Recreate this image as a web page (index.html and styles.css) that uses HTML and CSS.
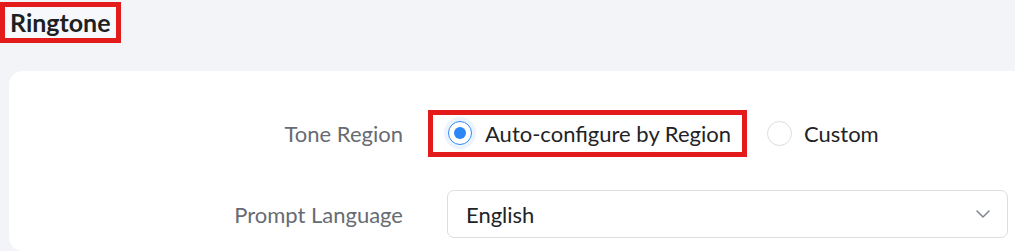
FILE: index.html
```html
<!DOCTYPE html>
<html lang="en">
<head>
<meta charset="UTF-8">
<title>Ringtone</title>
<link rel="stylesheet" href="styles.css">
</head>
<body>
  <div class="page-head">
    <h1 class="title mark">Ringtone</h1>
  </div>

  <div class="card">
    <!-- tone region -->
    <div class="row">
      <label class="label">Tone Region</label>
      <div class="control radios">
        <div class="mark radio-box">
          <span class="radio checked"><span class="dot"></span></span>
          <span class="radio-text">Auto-configure by Region</span>
        </div>
        <div class="radio-item">
          <span class="radio"></span>
          <span class="radio-text">Custom</span>
        </div>
      </div>
    </div>

    <!-- prompt language -->
    <div class="row">
      <label class="label">Prompt Language</label>
      <div class="control">
        <div class="select">
          <span>English</span>
          <svg class="chevron" width="14" height="8" viewBox="0 0 14 8">
            <path d="M1 1l6 6 6-6" fill="none" stroke="#80858f" stroke-width="1.5" stroke-linecap="round" stroke-linejoin="round"/>
          </svg>
        </div>
      </div>
    </div>
  </div>
</body>
</html>
```

FILE: styles.css
```css
html, body {
  overflow: hidden;
}
body {
  margin: 0;
  background: #f3f4f7;
  font-family: Lato, "Open Sans", sans-serif;
  color: #222326;
}
.page-head {
  height: 71px;
}
.mark {
  border: 5px solid #e31b1b;
}
.title {
  display: inline-block;
  margin: 2px 0 0 0;
  padding: 0 5px 0 5px;
  height: 31px;
  line-height: 31px;
  font-size: 25px;
  font-weight: 700;
  background: #f7f8fb;
  color: #1e1f22;
}
.card {
  margin: 0 -30px 0 9px;
  height: 180px;
  background: #fff;
  border-radius: 14px;
  padding-top: 38px;
  box-sizing: border-box;
}
.row {
  display: flex;
  align-items: center;
  height: 48px;
  margin-bottom: 33px;
}
.label {
  width: 394px;
  padding-right: 44px;
  box-sizing: content-box;
  text-align: right;
  font-size: 22px;
  color: #676b73;
}
.control {
  flex: 1;
}
.radios {
  display: flex;
  align-items: center;
}
.radio-box {
  display: flex;
  align-items: center;
  margin-left: -19px;
  height: 37px;
  padding: 0 11px 0 0;
}
.radio-item {
  display: flex;
  align-items: center;
  margin-left: 20px;
}
.radio {
  width: 25px;
  height: 25px;
  border-radius: 50%;
  border: 1px solid #dcdde0;
  box-sizing: border-box;
  display: flex;
  align-items: center;
  justify-content: center;
  margin-right: 12px;
}
.radio.checked {
  width: 24px;
  height: 24px;
  border: 1.5px solid #2d86f5;
  box-shadow: 0 0 0 4px #eaf3fe;
  margin-left: 15px;
  margin-right: 13px;
}
.dot {
  width: 12px;
  height: 12px;
  border-radius: 50%;
  background: #2d86f5;
}
.radio-text {
  font-size: 22px;
  color: #222326;
}
.select {
  width: 561px;
  height: 48px;
  box-sizing: border-box;
  border: 1px solid #dcdde0;
  border-radius: 7px;
  display: flex;
  align-items: center;
  justify-content: space-between;
  padding: 0 17px 0 18px;
  font-size: 22px;
}
```
